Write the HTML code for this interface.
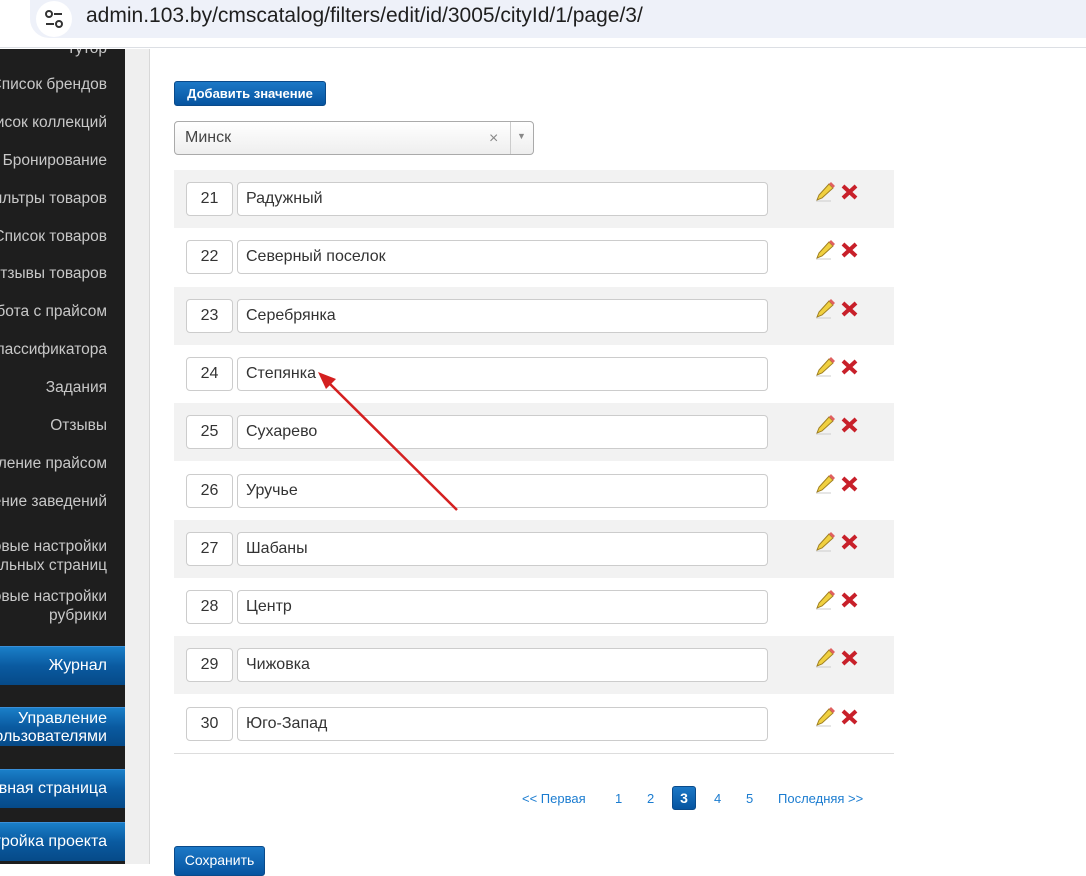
<!DOCTYPE html>
<html><head><meta charset="utf-8"><style>
*{box-sizing:border-box;margin:0;padding:0}
body{width:1086px;height:864px;overflow:hidden;background:#fff;font-family:"Liberation Sans",Arial,sans-serif;position:relative}
.bar{position:absolute;left:0;top:0;width:1086px;height:48px;background:#fff;border-bottom:1px solid #dcdfe4}
.url{position:absolute;left:30px;top:0;width:1080px;height:38px;background:#eef1f9;border-radius:0 0 0 19px}
.url .ic{position:absolute;left:6px;top:1px;width:36px;height:36px;border-radius:50%;background:#fff}
.url span{position:absolute;left:56px;top:4px;font-size:21px;color:#1f1f1f}
.side{position:absolute;left:0;top:49px;width:125px;height:815px;background:#1e1e1e;overflow:hidden}
.side div{position:absolute;right:18px;text-align:right;color:#c8c8c8;font-size:15.5px;white-space:nowrap;line-height:19px}
.side .b{right:0;width:300px;height:39px;background:linear-gradient(#1a7fc8,#0a5aa0 50%,#064a88);color:#fff;padding-right:18px;border-top:1px solid #3a8fd8}
.gap{position:absolute;left:125px;top:49px;width:25px;height:815px;background:#efefef;border-right:1px solid #d8d8d8}
.btn{position:absolute;background:linear-gradient(#1c78c6,#0654a0);color:#fff;font-weight:bold;font-size:13px;border-radius:3px;border:1px solid #0a4a8a;text-align:center}
.sel{position:absolute;left:174px;top:121px;width:360px;height:34px;border:1px solid #aaa;border-radius:4px;background:linear-gradient(#fff,#eee);font-size:16px;color:#444;padding:7px 10px}
.row{position:absolute;left:174px;width:720px;height:58px}
.g{background:#f2f2f2}
.num,.nm{position:absolute;top:12px;height:34px;border:1px solid #ccc;border-radius:4px;background:#fff;font-size:16px;color:#333;line-height:32px}
.num{left:12px;width:47px;text-align:center}
.nm{left:63px;width:531px;padding-left:8px}
.ic2{position:absolute;left:640px;top:11px}
.pg{position:absolute;top:791px;font-size:13px;color:#1b7cd0}
</style></head><body>
<div class="bar"><div class="url"><div class="ic"><svg width="36" height="36"><circle cx="13" cy="13" r="3" fill="none" stroke="#333" stroke-width="2"/><line x1="18" y1="13" x2="26" y2="13" stroke="#333" stroke-width="2"/><line x1="10" y1="23" x2="18" y2="23" stroke="#333" stroke-width="2"/><circle cx="23" cy="23" r="3" fill="none" stroke="#333" stroke-width="2"/></svg></div><span>admin.103.by/cmscatalog/filters/edit/id/3005/cityId/1/page/3/</span></div></div>
<div class="side">
<div style="top:-10px">Тутор</div>
<div style="top:26px">Список брендов</div>
<div style="top:64px">Список коллекций</div>
<div style="top:102px">Бронирование</div>
<div style="top:140px">Фильтры товаров</div>
<div style="top:178px">Список товаров</div>
<div style="top:215px">Отзывы товаров</div>
<div style="top:253px">Работа с прайсом</div>
<div style="top:291px">Классификатора</div>
<div style="top:329px">Задания</div>
<div style="top:367px">Отзывы</div>
<div style="top:405px">Управление прайсом</div>
<div style="top:443px">Управление заведений</div>
<div style="top:488px">Базовые настройки<br>отдельных страниц</div>
<div style="top:538px">Базовые настройки<br>рубрики</div>
<div class="b" style="top:597px;line-height:37px;font-size:16px">Журнал</div>
<div class="b" style="top:658px;line-height:18px;font-size:16px;padding-top:2px">Управление<br>пользователями</div>
<div class="b" style="top:720px;line-height:37px;font-size:16px">Главная страница</div>
<div class="b" style="top:773px;line-height:37px;font-size:16px">Настройка проекта</div>
</div>
<div class="gap"></div>
<div class="btn" style="left:174px;top:81px;width:152px;height:25px;line-height:23px">Добавить значение</div>
<div class="sel">Минск<span style="position:absolute;left:314px;top:8px;color:#888;font-size:16px">×</span><span style="position:absolute;left:335px;top:0;width:1px;height:32px;background:#ccc"></span><span style="position:absolute;left:342px;top:9px;color:#888;font-size:9px">▼</span></div>
<div id="rows"></div>
<div style="position:absolute;left:174px;top:753px;width:720px;height:1px;background:#ddd"></div>
<div class="pg" style="left:522px">&lt;&lt; Первая</div>
<div class="pg" style="left:615px">1</div>
<div class="pg" style="left:647px">2</div>
<div class="btn" style="left:672px;top:786px;width:24px;height:24px;line-height:22px;font-size:14px">3</div>
<div class="pg" style="left:714px">4</div>
<div class="pg" style="left:746px">5</div>
<div class="pg" style="left:778px">Последняя &gt;&gt;</div>
<div class="btn" style="left:174px;top:846px;width:91px;height:30px;line-height:26px;font-weight:normal;font-size:14px">Сохранить</div>
<svg style="position:absolute;left:0;top:0" width="1086" height="864"><line x1="457" y1="510" x2="326" y2="380" stroke="#d42020" stroke-width="2.5"/><polygon points="318,372 336,379 326,389" fill="#d42020"/></svg>
<script>
var n=["Радужный","Северный поселок","Серебрянка","Степянка","Сухарево","Уручье","Шабаны","Центр","Чижовка","Юго-Запад"],h="";
for(var i=0;i<10;i++){h+='<div class="row'+(i%2==0?' g':'')+'" style="top:'+(170+i*58.3)+'px"><div class="num">'+(21+i)+'</div><div class="nm">'+n[i]+'</div><svg class="ic2" width="50" height="24"><polygon points="3,19 5,14 15,3 19,7 8,17" fill="#f0d040" stroke="#a08020" stroke-width="1"/><polygon points="15,3 17,1 21,5 19,7" fill="#e06060"/><line x1="2" y1="20" x2="17" y2="20" stroke="#ccc"/><path d="M29 5 L42 17 M42 5 L29 17" stroke="#c8202a" stroke-width="4"/></svg></div>';}
document.getElementById("rows").innerHTML=h;
</script>
</body></html>
